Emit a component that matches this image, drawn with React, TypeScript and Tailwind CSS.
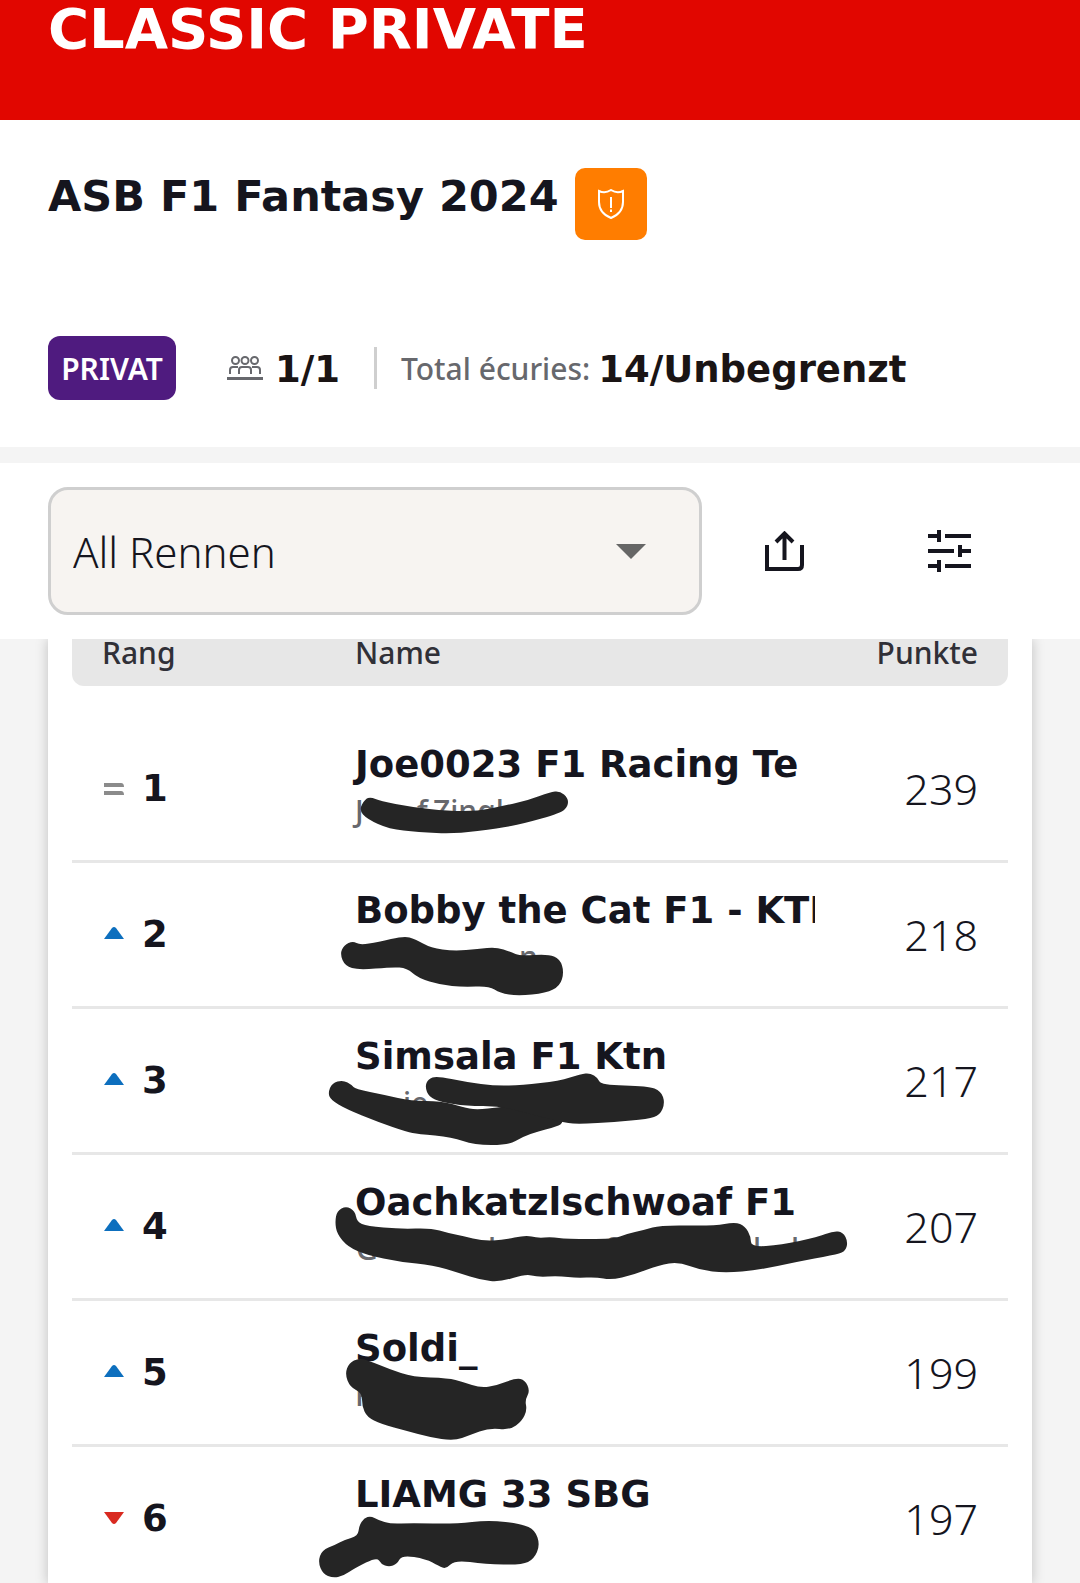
import React, { useState } from "react";

type Trend = "same" | "up" | "down";
type Point = [number, number];

interface Fragment {
  x: number;
  text: string;
}

interface Team {
  rank: number;
  trend: Trend;
  name: string;
  points: number;
  fragments: Fragment[];
  marks: Point[][];
}

const teams: Team[] = [
  {
    rank: 1,
    trend: "same",
    name: "Joe0023 F1 Racing Te",
    points: 239,
    fragments: [
      { x: 55, text: "J" },
      { x: 117, text: "f" },
      { x: 133, text: "Zingl" },
    ],
    marks: [
      [
        [59, 93], [65, 82], [71, 80], [80, 84], [111, 90], [148, 94], [178, 94],
        [203, 89], [229, 83], [250, 75], [260, 74], [268, 81], [268, 89],
        [261, 96], [222, 107], [200, 111], [155, 117], [118, 115], [89, 112],
        [67, 102],
      ],
    ],
  },
  {
    rank: 2,
    trend: "up",
    name: "Bobby the Cat F1 - KTN",
    points: 218,
    fragments: [{ x: 219, text: "n" }],
    marks: [
      [
        [40, 91], [44, 82], [53, 78], [60, 82], [78, 79], [104, 73], [115, 76],
        [131, 85], [154, 88], [178, 86], [196, 84], [211, 89], [220, 93],
        [248, 91], [260, 96], [264, 109], [260, 123], [246, 130], [218, 133],
        [200, 130], [189, 123], [163, 124], [141, 122], [118, 115], [107, 105],
        [92, 104], [59, 107], [45, 103],
      ],
    ],
  },
  {
    rank: 3,
    trend: "up",
    name: "Simsala F1 Ktn",
    points: 217,
    fragments: [{ x: 103, text: "ie" }],
    marks: [
      [
        [28, 84], [32, 74], [43, 71], [52, 76], [55, 80], [85, 86], [111, 92],
        [141, 92], [163, 98], [176, 101], [200, 98], [259, 90], [265, 114],
        [252, 119], [239, 122], [222, 128], [209, 136], [174, 136], [152, 128],
        [118, 125], [107, 123], [78, 113], [46, 100], [31, 91],
      ],
      [
        [125, 78], [128, 70], [137, 67], [166, 73], [196, 77], [222, 76],
        [259, 72], [281, 65], [290, 64], [298, 69], [301, 76], [348, 77],
        [361, 82], [365, 94], [360, 106], [348, 110], [314, 113], [281, 115],
        [265, 114], [230, 105], [200, 97], [166, 97], [141, 93], [129, 88],
      ],
    ],
  },
  {
    rank: 4,
    trend: "up",
    name: "Oachkatzlschwoaf F1",
    points: 207,
    fragments: [
      { x: 56, text: "G" },
      { x: 188, text: "l" },
      { x: 305, text: "f" },
      { x: 453, text: "l" },
      { x: 491, text: "l" },
    ],
    marks: [
      [
        [35, 67], [37, 56], [46, 51], [55, 56], [57, 67], [67, 71], [100, 74],
        [131, 73], [148, 78], [163, 81], [183, 86], [203, 85], [226, 80],
        [237, 83], [252, 82], [266, 84], [314, 84], [326, 79], [344, 75],
        [361, 70], [414, 71], [435, 67], [445, 71], [451, 82], [451, 92],
        [481, 90], [518, 82], [533, 76], [543, 77], [548, 87], [545, 97],
        [533, 100], [496, 107], [459, 115], [425, 118], [400, 115], [379, 107],
        [359, 110], [333, 120], [311, 125], [296, 122], [277, 123], [259, 121],
        [237, 122], [226, 119], [200, 127], [181, 125], [159, 118], [133, 110],
        [100, 107], [67, 100], [48, 92], [37, 79],
      ],
    ],
  },
  {
    rank: 5,
    trend: "up",
    name: "Soldi_",
    points: 199,
    fragments: [{ x: 55, text: "F" }],
    marks: [
      [
        [45, 73], [49, 62], [59, 57], [70, 60], [89, 68], [113, 76], [148, 77],
        [163, 81], [181, 87], [198, 84], [216, 77], [225, 79], [230, 90],
        [225, 99], [227, 109], [222, 120], [210, 129], [189, 127], [170, 134],
        [154, 140], [129, 136], [107, 130], [81, 123], [67, 116], [62, 105],
        [62, 92], [50, 86],
      ],
    ],
  },
  {
    rank: 6,
    trend: "down",
    name: "LIAMG 33 SBG",
    points: 197,
    fragments: [],
    marks: [
      [
        [18, 115], [22, 103], [35, 98], [44, 93], [58, 89], [59, 79], [64, 71],
        [71, 69], [78, 73], [91, 77], [111, 76], [155, 77], [189, 73],
        [222, 77], [235, 83], [240, 98], [234, 112], [222, 118], [185, 117],
        [155, 113], [146, 122], [139, 119], [126, 112], [102, 108], [97, 117],
        [89, 120], [81, 117], [77, 110], [55, 121], [43, 129], [33, 131],
        [23, 127],
      ],
    ],
  },
];

// closed curve running through the middle of every segment
const toPath = (points: Point[]): string => {
  const mid = (a: Point, b: Point) =>
    `${(a[0] + b[0]) / 2} ${(a[1] + b[1]) / 2}`;
  const last = points[points.length - 1];
  let d = `M${mid(last, points[0])}`;
  points.forEach((point, index) => {
    const next = points[(index + 1) % points.length];
    d += ` Q${point[0]} ${point[1]} ${mid(point, next)}`;
  });
  return `${d}Z`;
};

const TrendIcon: React.FC<{ trend: Trend }> = ({ trend }) => (
  <svg className="h-6 w-5 shrink-0" viewBox="0 0 20 24" aria-label={trend}>
    {trend === "same" && (
      <path d="M0 6H17Q20 6 20 10H0ZM0 14H17Q20 14 20 18H0Z" fill="#8b8b8b" />
    )}
    {trend === "up" && (
      <path d="M0 16L8 5Q10 3 12 5L20 16Z" fill="#0d6fbe" />
    )}
    {trend === "down" && (
      <path d="M0 5H20L12 16Q10 18 8 16Z" fill="#d92a20" />
    )}
  </svg>
);

const Scribble: React.FC<{ team: Team }> = ({ team }) => (
  <svg
    className="pointer-events-none absolute top-0 -left-[55px] h-[146px] w-[580px]"
    viewBox="0 0 580 146"
    aria-hidden="true"
  >
    {team.fragments.map((fragment) => (
      <text
        key={fragment.x}
        x={fragment.x}
        y={105}
        className="fill-[#67686d] font-['Noto_Sans',sans-serif] text-[30px] font-medium"
      >
        {fragment.text}
      </text>
    ))}
    {team.marks.map((points, index) => (
      <path key={index} d={toPath(points)} fill="#252525" />
    ))}
  </svg>
);

const App: React.FC = () => {
  const [race, setRace] = useState<string>("all");

  return (
    <div className="min-h-screen overflow-hidden bg-[#f4f4f4] font-['Noto_Sans',sans-serif] text-[#15151e]">
      <header className="h-[120px] bg-[#e10600] px-12">
        <p className="font-['DejaVu_Sans',sans-serif] text-[56px] leading-[58px] font-bold text-white">
          CLASSIC PRIVATE
        </p>
      </header>

      <section className="bg-white px-12 pt-12 pb-[47px]">
        <div className="flex gap-4">
          <h1 className="font-['DejaVu_Sans',sans-serif] text-[43px] leading-[56px] font-bold">
            ASB F1 Fantasy 2024
          </h1>
          <button
            type="button"
            aria-label="Report league"
            className="flex size-[72px] items-center justify-center rounded-[10px] bg-[#ff7d00]"
          >
            <svg
              className="h-[30px] w-7"
              viewBox="0 0 28 30"
              fill="none"
              stroke="#fff"
              strokeWidth="2"
            >
              <path d="M2 2Q8 5 14 1Q20 5 26 2V13Q26 24 14 29Q2 24 2 13Z" />
              <path d="M14 8V19M14 20.500V23" />
            </svg>
          </button>
        </div>

        <div className="mt-24 flex h-16 items-center">
          <span className="flex h-16 w-32 items-center justify-center rounded-xl bg-[#4f1b7f] text-[30px] font-semibold text-white">
            PRIVAT
          </span>
          <svg
            className="ml-[51px] h-6 w-9"
            viewBox="0 0 36 24"
            fill="none"
            stroke="#67686d"
            strokeWidth="2"
          >
            <circle cx="8.500" cy="4.500" r="3.500" />
            <circle cx="18" cy="4.500" r="3.500" />
            <circle cx="27.500" cy="4.500" r="3.500" />
            <path d="M3 18V14Q3 11 6 11H11M12 18V14Q12 11 15 11H21Q24 11 24 14V18M25 11H30Q33 11 33 14V18" />
            <path d="M0 22.500H36" strokeWidth="3" />
          </svg>
          <span className="ml-3 pt-1 font-['DejaVu_Sans',sans-serif] text-[37px] font-bold text-[#1a1414]">
            1/1
          </span>
          <span className="ml-[34px] h-[42px] w-[3px] bg-[#cfcfcf]" />
          <span className="ml-6 text-[30px] font-medium text-[#67686d]">
            Total écuries:
          </span>
          <span className="ml-2 pt-1 font-['DejaVu_Sans',sans-serif] text-[37px] font-bold text-[#1a1414]">
            14/Unbegrenzt
          </span>
        </div>
      </section>

      <section className="mt-4 flex items-center bg-white px-12 py-6">
        <div className="relative h-32 w-[654px]">
          <select
            aria-label="Rennen"
            value={race}
            onChange={(e) => setRace(e.target.value)}
            className="size-full appearance-none rounded-[20px] border-[3px] border-[#cfcfcf] bg-[#f7f4f1] px-[22px] text-[42px] font-light"
          >
            <option value="all">All Rennen</option>
          </select>
          <svg
            className="pointer-events-none absolute top-[57px] right-14 h-[15px] w-[30px]"
            viewBox="0 0 30 15"
          >
            <path d="M0 0H30L15 15Z" fill="#666" />
          </svg>
        </div>
        <div className="ml-[63px] flex gap-[123px]">
          <button type="button" aria-label="Share">
            <svg
              className="size-10"
              viewBox="0 0 40 40"
              fill="none"
              stroke="#15151e"
              strokeWidth="4"
            >
              <path d="M2 14V38H33Q37 38 37 34V14" />
              <path d="M19.500 29V3M11 11L19.500 2.500L28 11" />
            </svg>
          </button>
          <button type="button" aria-label="Filter">
            <svg
              className="h-[42px] w-[43px]"
              viewBox="0 0 43 42"
              fill="none"
              stroke="#15151e"
              strokeWidth="4"
            >
              <path d="M0 6H11M11 0V12M17 6H43" />
              <path d="M0 21H26M32 15V27M32 21H43" />
              <path d="M0 36H11M11 30V42M17 36H43" />
            </svg>
          </button>
        </div>
      </section>

      <main className="mx-12 bg-white px-6 shadow-[0_0_12px_rgba(0,0,0,0.22)] [clip-path:inset(0_-24px)]">
        <table className="w-full table-fixed border-separate border-spacing-0">
          <thead>
            <tr className="h-[47px] text-[30px] leading-[26px] text-[#303037]">
              <th className="w-[283px] rounded-bl-xl bg-[#e7e7e7] pb-5 pl-[30px] text-left align-middle font-medium">
                Rang
              </th>
              <th className="bg-[#e7e7e7] pb-5 text-left align-middle font-medium">
                Name
              </th>
              <th className="w-[190px] rounded-br-xl bg-[#e7e7e7] pr-[30px] pb-5 text-right align-middle font-medium">
                Punkte
              </th>
            </tr>
          </thead>
          <tbody className="before:block before:h-[31px] before:content-['']">
            {teams.map((team) => (
              <tr key={team.rank} className="group">
                <td className="h-[146px] border-b-[3px] border-[#e7e7e7] pl-8 align-top group-last:h-[137px] group-last:border-b-0">
                  <div className="flex h-[143px] items-center gap-[18px] font-['DejaVu_Sans',sans-serif] text-[37px] font-bold group-last:h-[137px] group-last:pt-[6px]">
                    <TrendIcon trend={team.trend} />
                    {team.rank}
                  </div>
                </td>
                <td className="relative border-b-[3px] border-[#e7e7e7] align-top group-last:border-b-0">
                  <p className="-ml-2 w-[468px] overflow-hidden pt-[25px] pl-2 font-['DejaVu_Sans',sans-serif] text-[37px] leading-[46px] font-bold whitespace-nowrap">
                    {team.name}
                  </p>
                  <Scribble team={team} />
                </td>
                <td className="border-b-[3px] border-[#e7e7e7] pr-[30px] text-right align-top text-[43px] leading-[143px] font-light group-last:border-b-0 group-last:pt-[6px] group-last:leading-[131px]">
                  {team.points}
                </td>
              </tr>
            ))}
          </tbody>
        </table>
      </main>
    </div>
  );
};

export default App;
